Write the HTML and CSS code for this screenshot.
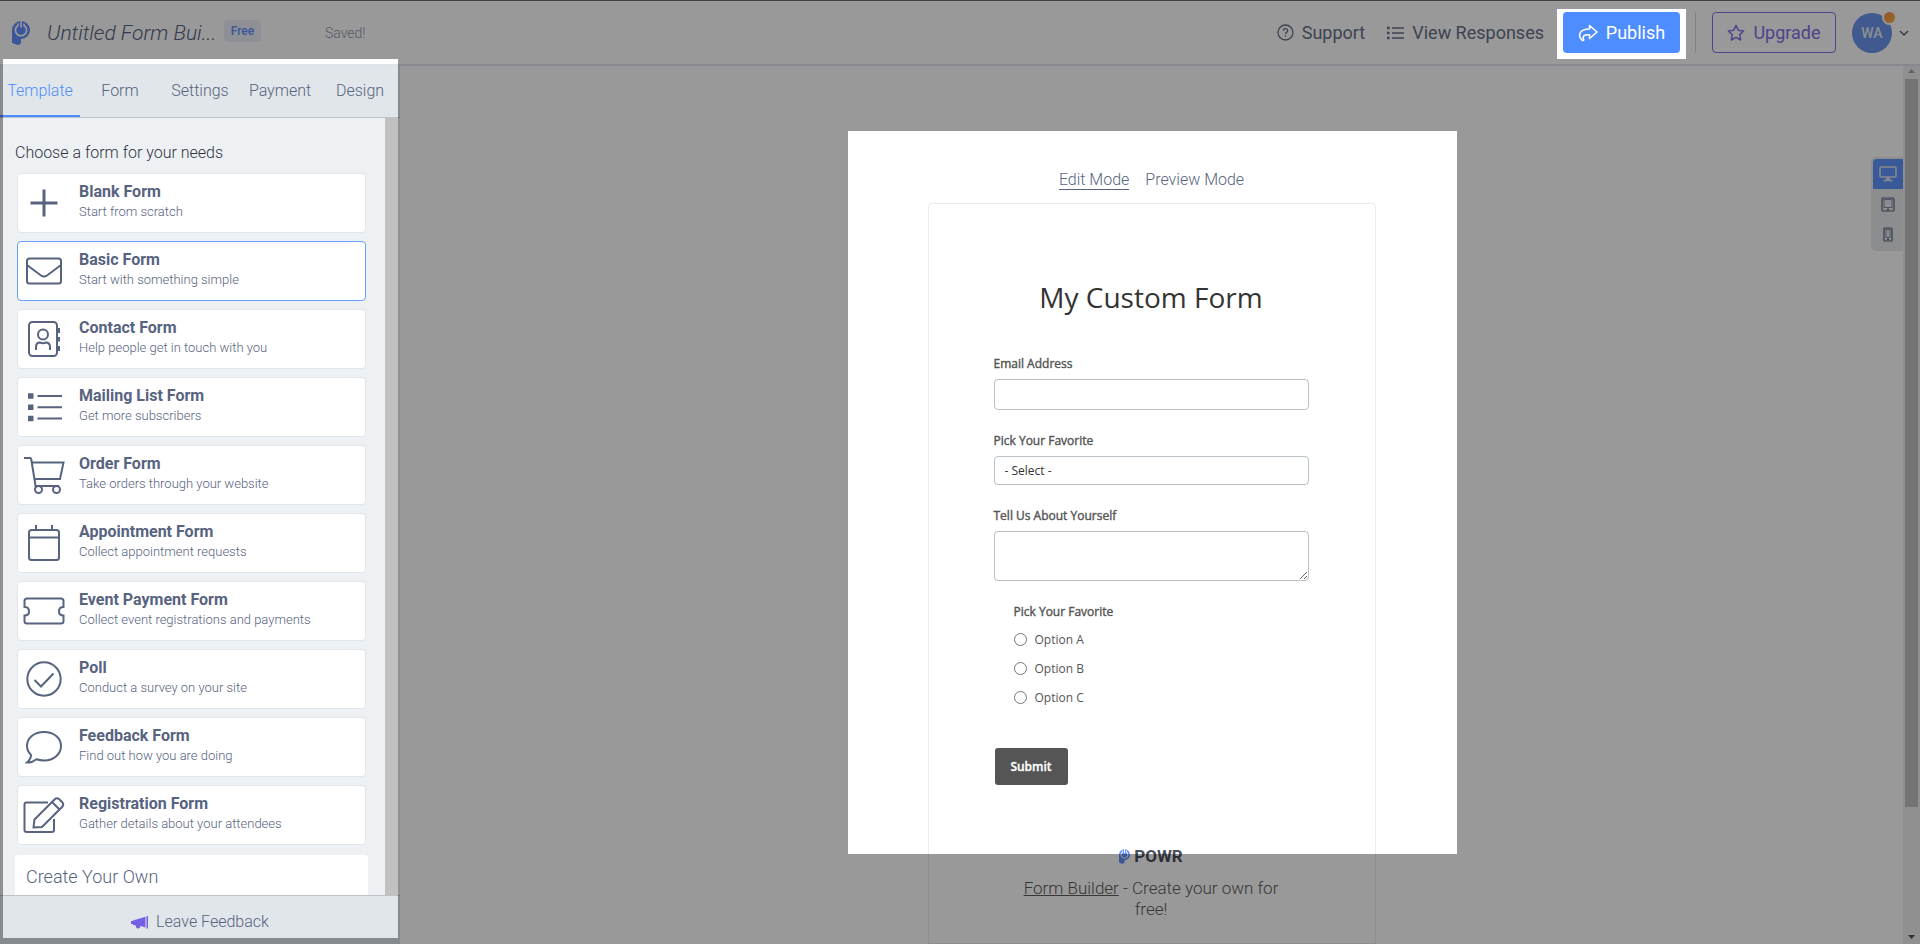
FILE: index.html
```html
<!DOCTYPE html>
<html lang="en">
<head>
<meta charset="utf-8">
<title>Form Builder</title>
<link rel="stylesheet" href="styles.css">
</head>
<body>
<svg class="defs" width="0" height="0" aria-hidden="true">
  <symbol id="logo" viewBox="0 0 18 24">
    <path fill="currentColor" d="M9 0a9 9 0 0 1 0 18v4q-1 1.800-3 1.900Q2 23.500 0 21.500V9A9 9 0 0 1 9 0z"/>
    <path fill="none" stroke="#fff" stroke-width="1.700" d="M5.900 2.500v2A5.600 5.600 0 1 0 12.100 4.500v-2"/>
    <path fill="#fff" d="M8.200 0h1.600v6.500H8.200z"/>
  </symbol>
</svg>
<header class="topbar">
  <svg class="brand" width="18" height="24"><use href="#logo"/></svg>
  <h1 class="app-title">Untitled Form Bui...</h1>
  <span class="badge">Free</span>
  <span class="saved">Saved!</span>
  <nav class="actions">
    <a class="link support" href="#"><svg width="17" height="17" viewBox="0 0 17 17" fill="none" stroke="currentColor" stroke-width="1.300"><circle cx="8.500" cy="8.500" r="7.500"/><path d="M6.300 6.700a2.200 2 0 1 1 3.300 1.700c-.8.500-1.100.8-1.100 1.600M8.500 11.300v1.400"/></svg>Support</a>
    <a class="link" href="#"><svg width="17" height="14" viewBox="0 0 17 14" fill="none" stroke="currentColor" stroke-width="1.500"><path d="M5 2h12M5 7h12M5 12h12"/><path stroke-width="2.600" d="M0 2h2.600M0 7h2.600M0 12h2.600"/></svg>View Responses</a>
    <button class="btn publish" type="button"><svg width="20" height="18" viewBox="0 0 20 18" fill="none" stroke="currentColor" stroke-width="1.600" stroke-linejoin="round"><path d="M11.500 1.500 19 8l-7.500 6.500v-3.700C8 10.500 5.500 11 5.200 13.300c-.1 1 .3 1.900.6 2.700-.5 1-1.600.6-2.300-.4C.3 11.800.300 5.300 11.500 5z"/></svg>Publish</button>
    <span class="divider"></span>
    <button class="btn upgrade" type="button"><svg width="18" height="18" viewBox="0 0 18 18" fill="none" stroke="currentColor" stroke-width="1.500" stroke-linejoin="round"><path d="m9 1.400 2.300 4.900 5.300.7-3.900 3.700 1 5.300L9 13.400 4.300 16l1-5.300L1.400 7l5.300-.7z"/></svg>Upgrade</button>
    <button class="account" type="button"><span class="avatar">WA<i class="dot"></i></span><svg width="10" height="6" viewBox="0 0 10 6" fill="none" stroke="currentColor" stroke-width="1.500"><path d="m1 1 4 4 4-4"/></svg></button>
  </nav>
</header>

<div class="workspace">
  <aside class="sidebar">
    <nav class="tabs">
      <a class="tab current" href="#">Template</a><a class="tab" href="#">Form</a><a class="tab" href="#">Settings</a><a class="tab" href="#">Payment</a><a class="tab" href="#">Design</a>
    </nav>
    <div class="panel">
      <div class="templates">
        <h2 class="choose">Choose a form for your needs</h2>
        <div class="cards">
          <button class="card" type="button"><svg class="icon" viewBox="0 0 42 40"><path stroke-width="3" d="M21 6.500v27M7.500 20h27"/></svg><span class="copy"><b>Blank Form</b><small>Start from scratch</small></span></button>
          <button class="card selected" type="button"><svg class="icon" viewBox="0 0 42 40"><rect x="4" y="7.500" width="34" height="25" rx="2.500"/><path d="m4 14 14 10.500q3 2 6 0L38 14"/></svg><span class="copy"><b>Basic Form</b><small>Start with something simple</small></span></button>
          <button class="card" type="button"><svg class="icon" viewBox="0 0 42 40"><rect x="6" y="3" width="28" height="34" rx="3.500"/><circle cx="20" cy="15.500" r="5"/><path d="M13 31v-3q0-4.500 4-4.500 3 1.300 6 0 4 0 4 4.500v3"/><path stroke-width="3" d="M35.500 9v5M35.500 18v4.500M35.500 27v5"/></svg><span class="copy"><b>Contact Form</b><small>Help people get in touch with you</small></span></button>
          <button class="card" type="button"><svg class="icon" viewBox="0 0 42 40"><path d="M14.500 9H39M14.500 20.300H39M14.500 31.500H39"/><path stroke-width="5.500" d="M5 9h5.500M5 20.300h5.500M5 31.500h5.500"/></svg><span class="copy"><b>Mailing List Form</b><small>Get more subscribers</small></span></button>
          <button class="card" type="button"><svg class="icon" viewBox="0 0 42 40"><path d="M1 3h6q1 0 1.200 1l4.600 28.500M9 7.500h31.500L37 24H11.500M12.500 31H36"/><circle cx="15.500" cy="34.500" r="3.500" fill="#fff"/><circle cx="33.500" cy="34.500" r="3.500" fill="#fff"/></svg><span class="copy"><b>Order Form</b><small>Take orders through your website</small></span></button>
          <button class="card" type="button"><svg class="icon" viewBox="0 0 42 40"><rect x="6" y="7" width="30" height="30" rx="2.500"/><path d="M6 14.500h30M13 2v5M29 2v5"/></svg><span class="copy"><b>Appointment Form</b><small>Collect appointment requests</small></span></button>
          <button class="card" type="button"><svg class="icon" viewBox="0 0 42 40"><path d="M4 7.500h34q2.500 0 2.500 2.500v6q-4.500 0-4.500 4.200t4.500 4.300V30q0 2.500-2.500 2.500H4Q1.500 32.500 1.500 30v-5.500q4.500 0 4.500-4.300T1.500 16v-6Q1.500 7.500 4 7.500z"/></svg><span class="copy"><b>Event Payment Form</b><small>Collect event registrations and payments</small></span></button>
          <button class="card" type="button"><svg class="icon" viewBox="0 0 42 40"><circle cx="21" cy="20" r="16.700"/><path d="m11.500 21 6.500 6.500L30.500 14.500"/></svg><span class="copy"><b>Poll</b><small>Conduct a survey on your site</small></span></button>
          <button class="card" type="button"><svg class="icon" viewBox="0 0 42 40"><path d="M21 5C11 5 4 11 4 19c0 4 1.500 6.500 4 9 0 3-1.500 5.500-4 7.500 3.500.3 6.800-1 9.500-3.200 2.300.8 4.800 1.200 7.500 1.200 10 0 17-6.500 17-14.500S31 5 21 5z"/></svg><span class="copy"><b>Feedback Form</b><small>Find out how you are doing</small></span></button>
          <button class="card" type="button"><svg class="icon" viewBox="0 0 42 40"><path d="M25 7.500H3.500q-2 0-2 2V35q0 2 2 2H29q2 0 2-2V24"/><path d="m10.500 32.500 1-8L32 4q2-1.500 4 0l3.500 3.500q1.500 2 0 4L19 32zM29 7l7.500 7.500"/></svg><span class="copy"><b>Registration Form</b><small>Gather details about your attendees</small></span></button>
        </div>
        <section class="own">Create Your Own</section>
      </div>
      <div class="scroll"><i class="thumb"></i></div>
    </div>
    <button class="feedback" type="button"><svg width="17" height="13" viewBox="0 0 17 13" fill="#7460e4"><path d="M14.500.8v10.800L9.500 10q-.4 2.600-2.700 2.500-2-.2-2-3L2 9 1.800 8H0V5h1.800L2 4.500zM15.500 0H17v12.500h-1.500z"/></svg>Leave Feedback</button>
  </aside>

  <main class="stage">
    <div class="preview">
      <nav class="modes"><a class="mode on" href="#">Edit Mode</a><a class="mode" href="#">Preview Mode</a></nav>
      <form class="form">
        <h2 class="form-title">My Custom Form</h2>
        <div class="field"><label for="email">Email Address</label><input id="email" class="control" type="email"></div>
        <div class="field"><label for="pick">Pick Your Favorite</label><select id="pick" class="control select"><option>- Select -</option></select></div>
        <div class="field about"><label for="about">Tell Us About Yourself</label><textarea id="about" class="control area"></textarea></div>
        <fieldset class="choices">
          <legend>Pick Your Favorite</legend>
          <label class="choice"><input type="radio" name="fav">Option A</label>
          <label class="choice"><input type="radio" name="fav">Option B</label>
          <label class="choice"><input type="radio" name="fav">Option C</label>
        </fieldset>
        <button class="submit" type="button">Submit</button>
        <footer class="credit">
          <span class="powr"><svg width="11" height="15"><use href="#logo"/></svg>POWR</span>
          <p><a href="#">Form Builder</a> - Create your own for free!</p>
        </footer>
      </form>
    </div>
    <div class="devices">
      <button class="device active" type="button" aria-label="Desktop"><svg width="18" height="16" viewBox="0 0 18 16" fill="none" stroke="currentColor" stroke-width="1.500"><rect x="1" y="1" width="16" height="10" rx="1"/><path d="M9 11v3M4.500 14.500h9M7 12.700h4"/></svg></button>
      <button class="device" type="button" aria-label="Tablet"><svg width="14" height="15" viewBox="0 0 14 15" fill="none" stroke="currentColor" stroke-width="1.200"><rect x="1" y="1" width="12" height="13" rx="1"/><rect x="3" y="2.500" width="8" height="8" stroke-width=".7"/><path d="M6 12.300h2"/></svg></button>
      <button class="device" type="button" aria-label="Phone"><svg width="10" height="15" viewBox="0 0 10 15" fill="none" stroke="currentColor" stroke-width="1.200"><rect x="1" y="1" width="8" height="13" rx="1"/><rect x="3" y="2.500" width="4" height="8" stroke-width=".7"/><path d="M4 12.300h2"/></svg></button>
    </div>
    <div class="scroll main-scroll">
      <svg class="arrow up" width="7" height="4" viewBox="0 0 7 4"><path d="M0 4 3.500 0 7 4z"/></svg>
      <i class="thumb"></i>
      <svg class="arrow" width="7" height="4" viewBox="0 0 7 4"><path d="M0 0h7L3.500 4z"/></svg>
    </div>
  </main>
</div>
<div class="dim"></div>
</body>
</html>
```
FILE: styles.css
```css
* { box-sizing: border-box; }
body {
  margin: 0;
  height: 100vh;
  display: flex;
  flex-direction: column;
  overflow: hidden;
  background: #fff;
  color: #57637f;
  font: 300 16px/20px Roboto, "Liberation Sans", sans-serif;
}
button { font: inherit; color: inherit; background: none; border: 0; padding: 0; }
a { color: inherit; text-decoration: none; }
h1, h2, p { margin: 0; font-weight: 300; }
.defs { position: absolute; }

/* Top bar */
.topbar {
  flex: none;
  display: flex;
  align-items: center;
  height: 66px;
  padding: 0 11px 0 12px;
  border-top: 1px solid #6c6c70;
  border-bottom: 2px solid #e1e3ec;
}
.brand { color: #6390ff; margin-right: 17px; }
.app-title { font-size: 21px; line-height: 24px; font-style: italic; width: 169px; white-space: nowrap; }
.badge {
  margin: 0 64px 4px 8px;
  width: 37px;
  height: 22px;
  border-radius: 4px;
  background: #edf1fb;
  color: #6390ff;
  font-size: 12px;
  font-weight: 500;
  line-height: 22px;
  text-align: center;
}
.saved { font-size: 14px; color: #8f96aa; }
.actions { display: flex; align-items: center; margin-left: auto; font-size: 18px; }
.link { display: flex; align-items: center; gap: 8px; color: #68718a; font-weight: 400; }
.support { margin-right: 22px; }
.btn {
  display: flex;
  align-items: center;
  justify-content: center;
  gap: 8px;
  height: 41px;
  border-radius: 4px;
}
.publish { width: 117px; margin-left: 19px; background: #4d8dff; color: #fff; font-weight: 400; }
.divider { width: 1px; height: 41px; margin: 0 16px 0 15px; background: #d5dadf; }
.upgrade { width: 124px; border: 1px solid #8570e8; color: #8570e8; font-weight: 400; }
.account { display: flex; align-items: center; gap: 7px; margin-left: 16px; }
.avatar {
  position: relative;
  width: 40px;
  height: 40px;
  border-radius: 50%;
  background: #6c94ee;
  color: #e8edf6;
  font-size: 14px;
  font-weight: 500;
  line-height: 40px;
}
.dot {
  position: absolute;
  top: -3px;
  right: -5px;
  width: 15px;
  height: 15px;
  border: 2px solid #fff;
  border-radius: 50%;
  background: linear-gradient(135deg, #f58c4e, #ffb43c);
}

/* Sidebar */
.workspace { flex: 1; min-height: 0; display: flex; }
.sidebar { flex: none; width: 400px; display: flex; flex-direction: column; background: #edf1f4; }
.tabs { flex: none; display: flex; height: 52px; background: #e1e6ea; border-bottom: 1px solid #bdc3c9; }
.tab { flex: 1; text-align: center; line-height: 50px; }
.current { color: #4d8dff; border-bottom: 2px solid #4d8dff; }
.panel { flex: 1; min-height: 0; display: flex; }
.templates { flex: 1; padding: 24px 15px 0; overflow: hidden; }
.choose { font-size: 16px; line-height: 22px; color: #30333f; }
.cards { display: flex; flex-direction: column; gap: 8px; padding: 9px 2px 10px; }
.card {
  display: flex;
  align-items: center;
  gap: 14px;
  height: 60px;
  padding: 0 5px;
  border: 1px solid #e1e6ea;
  border-radius: 4px;
  background: #fff;
  text-align: left;
}
.selected { border-color: #6ca0ff; }
.icon { width: 42px; height: 40px; fill: none; stroke: #57637f; stroke-width: 2; }
.copy { display: flex; flex-direction: column; padding-bottom: 2px; }
.copy b { font-weight: 700; line-height: 20px; }
.copy small { font-size: 13px; line-height: 20px; }
.own { height: 60px; padding: 11px; border-radius: 4px; background: #fff; font-size: 18px; line-height: 22px; }
.scroll { flex: none; width: 17px; padding: 0 2px; background: #f1f1f1; display: flex; flex-direction: column; align-items: center; }
.thumb { flex: 1; width: 100%; background: #c1c1c1; }
.feedback {
  flex: none;
  display: flex;
  justify-content: center;
  gap: 8px;
  height: 49px;
  padding-top: 16px;
  border-top: 1px solid #bdc3c9;
  background: #e1e6ea;
}
.feedback svg { margin-top: 4px; }

/* Preview stage */
.stage { flex: 1; display: flex; position: relative; }
.preview { flex: 1; display: flex; flex-direction: column; align-items: center; overflow: hidden; }
.modes { display: flex; gap: 16px; padding: 105px 0 13px; }
.mode { border-bottom: 1px solid transparent; line-height: 18px; }
.on { border-color: #57637f; }
.form {
  flex: 1 0 auto;
  width: 448px;
  padding: 75px 66px 0 65px;
  border: 1px solid #ececec;
  border-radius: 4px 4px 0 0;
  color: #444;
  font: 400 12px/16px "Open Sans", sans-serif;
}
.form-title { font-size: 28px; font-weight: 400; line-height: 36px; text-align: center; color: #333; margin-bottom: 41px; }
.field { display: flex; flex-direction: column; gap: 7px; margin-bottom: 23px; }
.field label, .choices legend { font-weight: 500; color: #555; -webkit-text-stroke: 0.4px #555; }
.control {
  height: 31px;
  width: 100%;
  margin: 0;
  border: 1px solid #b9c2c8;
  border-radius: 4px;
  background: #fff;
  color: #333;
  font: 400 12px/16px "Open Sans", sans-serif;
}
.select { height: 29px; padding: 0 10px; appearance: none; }
.area { height: 50px; }
.choices { margin: 0 0 36px; padding: 0 0 0 20px; border: 0; }
.choices legend { padding: 0; margin-bottom: 5px; }
.choice { display: flex; align-items: center; gap: 8px; height: 29px; color: #555; }
.choice input { width: 13px; height: 13px; margin: 0; }
.submit {
  display: block;
  width: 73px;
  height: 37px;
  margin-left: 1px;
  border-radius: 3px;
  background: #555;
  color: #fff;
  font-weight: 600;
  -webkit-text-stroke: 0.3px #fff;
}
.credit { padding: 61px 30px 0; text-align: center; font: 300 17px/21px Roboto, sans-serif; }
.powr { display: flex; justify-content: center; align-items: center; gap: 4px; margin-bottom: 11px; font-weight: 700; color: #4a4f5c; }
.powr svg { color: #6390ff; }
.credit p { color: #5c5c5c; }
.credit a { text-decoration: underline; }

.devices {
  position: absolute;
  top: 91px;
  right: 17px;
  padding: 2px 0 2px 2px;
  border-radius: 5px 0 0 5px;
  background: #e8ebef;
}
.device { display: flex; align-items: center; justify-content: center; width: 30px; height: 30px; }
.active { background: #6295ff; color: #e1e6ea; border-radius: 4px 0 0 0; }
.main-scroll .thumb { flex: none; height: calc(100% - 150px); margin-bottom: auto; }
.arrow { flex: none; margin: 5px 0; fill: #505050; }
.up { margin: 3px 0 6px; fill: #a3a3a3; }

/* Tour backdrop with cut-outs for the sidebar, the Publish button and the form */
.dim {
  position: fixed;
  inset: 0;
  pointer-events: none;
  background: rgba(0, 0, 0, 0.4);
  clip-path: polygon(evenodd,
    0 0, 100% 0, 100% 100%, 0 100%, 0 0,
    3px 59px, 398px 59px, 398px calc(100% - 6px), 3px calc(100% - 6px), 3px 59px, 0 0,
    calc(100% - 363px) 9px, calc(100% - 234px) 9px, calc(100% - 234px) 59px, calc(100% - 363px) 59px, calc(100% - 363px) 9px, 0 0,
    calc(50% - 112px) 131px, calc(50% + 497px) 131px, calc(50% + 497px) 854px, calc(50% - 112px) 854px, calc(50% - 112px) 131px, 0 0);
}
```
